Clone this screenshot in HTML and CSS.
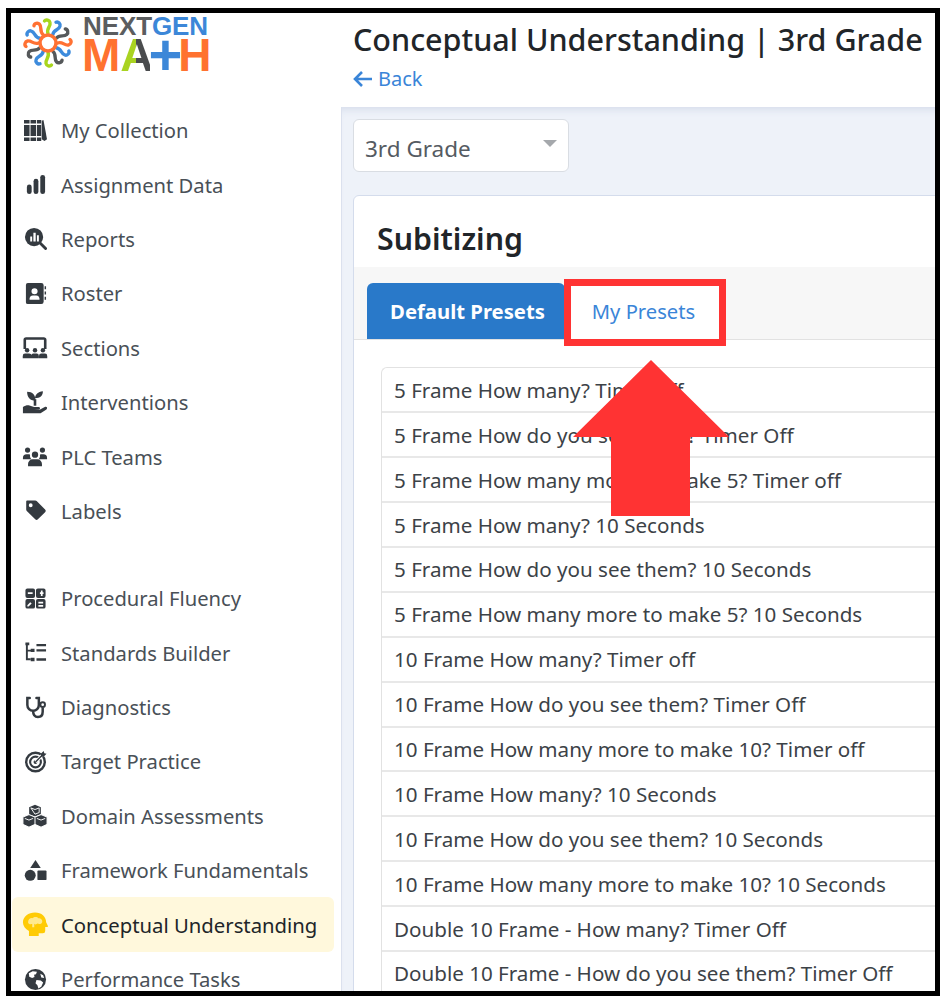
FILE: index.html
```html
<!DOCTYPE html>
<html lang="en">
<head>
<meta charset="utf-8">
<title>Conceptual Understanding | 3rd Grade</title>
<link rel="stylesheet" href="styles.css">
</head>
<body>
<svg class="defs" width="0" height="0" aria-hidden="true">
  <defs>
    <g id="petal" fill="none" stroke-width="3.4" stroke-linecap="round">
      <path d="M26 17C24 12 29 10 28 6C27.500 3.500 24 2.500 22.500 4.500"/>
    </g>
  </defs>
</svg>
<div class="frame">
  <aside class="sidebar">
    <div class="logo">
      <svg class="logo-mark" viewBox="0 0 52 54" aria-hidden="true">
        <g transform="translate(0 0.500)">
          <use href="#petal" stroke="#a8d51d"/>
          <use href="#petal" stroke="#3d8bdc" transform="rotate(30 26 26.500)"/>
          <use href="#petal" stroke="#55585a" transform="rotate(60 26 26.500)"/>
          <use href="#petal" stroke="#ff7133" transform="rotate(90 26 26.500)"/>
          <use href="#petal" stroke="#3d8bdc" transform="rotate(120 26 26.500)"/>
          <use href="#petal" stroke="#55585a" transform="rotate(150 26 26.500)"/>
          <use href="#petal" stroke="#a8d51d" transform="rotate(180 26 26.500)"/>
          <use href="#petal" stroke="#3d8bdc" transform="rotate(210 26 26.500)"/>
          <use href="#petal" stroke="#55585a" transform="rotate(240 26 26.500)"/>
          <use href="#petal" stroke="#ff7133" transform="rotate(270 26 26.500)"/>
          <use href="#petal" stroke="#3d8bdc" transform="rotate(300 26 26.500)"/>
          <use href="#petal" stroke="#ff7133" transform="rotate(330 26 26.500)"/>
          <circle cx="26" cy="26.500" r="8" fill="none" stroke="#ff7133" stroke-width="3.500"/>
        </g>
      </svg>
      <div class="logo-word">
        <div class="logo-top"><span class="gray">NEXT</span><span class="blue">GEN</span></div>
        <div class="logo-bottom"><span class="orange">M</span><span class="split-a">A</span><span class="blue plus">+</span><span class="orange">H</span></div>
      </div>
    </div>
    <nav class="nav">
      <a class="nav-item"><span class="nav-icon"><svg viewBox="0 0 24 24"><path d="M0 1h5.800v22H0zM6.800 1h5.800v22H6.800zM13.500 1h4.500v22h-4.500z"/><path d="M18.500 1.800l1.800-.8 3.700 20-2.600 2-2.900-2z"/><path d="M0 5.500h18M0 18.500h18" stroke="#fff" stroke-width="1.500" fill="none"/></svg></span><span>My Collection</span></a>
      <a class="nav-item"><span class="nav-icon"><svg viewBox="0 0 24 24"><rect x="3" y="12" width="5" height="10" rx="2.500"/><rect x="10" y="6" width="5" height="16" rx="2.500"/><rect x="17" y="2" width="5" height="20" rx="2.500"/></svg></span><span>Assignment Data</span></a>
      <a class="nav-item"><span class="nav-icon"><svg viewBox="0 0 24 24"><circle cx="10.500" cy="10.500" r="9.500"/><path d="M16.500 16.500l6 6" stroke="#343a40" stroke-width="3" stroke-linecap="round"/><path d="M6.500 10h2v5h-2zM9.800 6h2.400v9H9.800zM13.500 8.500h2V15h-2z" fill="#fff"/></svg></span><span>Reports</span></a>
      <a class="nav-item"><span class="nav-icon"><svg viewBox="0 0 24 24"><path fill-rule="evenodd" d="M4 1h14a2.500 2.500 0 0 1 2.500 2.500v17A2.500 2.500 0 0 1 18 23H4a2 2 0 0 1-2-2V3a2 2 0 0 1 2-2zm7 5.500a3.200 3.200 0 1 0 0 6.400 3.200 3.200 0 0 0 0-6.400zM5.800 18.500h10.400c.4-2.800-1.500-4.400-3.400-4.400H9.200c-1.900 0-3.800 1.600-3.400 4.400z"/><path d="M21.500 4.500H23v3h-1.500zM21.500 10H23v3h-1.500zM21.500 15.500H23v3h-1.500z"/></svg></span><span>Roster</span></a>
      <a class="nav-item"><span class="nav-icon wide"><svg viewBox="0 0 28 24"><path d="M3 13V3.200A1.500 1.500 0 0 1 4.500 1.700h19A1.500 1.500 0 0 1 25 3.200V13" fill="none" stroke="#343a40" stroke-width="2.800"/><circle cx="5.500" cy="14.500" r="2.400"/><circle cx="14" cy="14.500" r="2.400"/><circle cx="22.500" cy="14.500" r="2.400"/><path d="M.8 23v-2.500a2.500 2.500 0 0 1 2.500-2.500h4.400a2.500 2.500 0 0 1 2.500 2.500V23zM9.800 23v-2.500a2.500 2.500 0 0 1 2.500-2.500h3.400a2.500 2.500 0 0 1 2.500 2.500V23zM18.300 23v-2.500a2.500 2.500 0 0 1 2.500-2.500h3.900a2.500 2.500 0 0 1 2.500 2.500V23z"/></svg></span><span>Sections</span></a>
      <a class="nav-item"><span class="nav-icon wide"><svg viewBox="0 0 28 24"><path d="M14 16V9" stroke="#343a40" stroke-width="2.800" fill="none"/><path d="M14.500 10.500C8 10.500 5.500 6.500 5.500 1 11.500 1 14.500 4.500 14.500 10.500zM14 8c.5-4 3-7 8.500-7.500 0 5-3 7.500-8.500 7.500z"/><path d="M1 24v-6.500c2.500-1.800 5-2.300 7-1.700l5 1.500h5c1.800 0 1.800 3 0 3h-5l5.500.2 6-3c2-1 3.500 1 1.800 2.500L20 24z"/></svg></span><span>Interventions</span></a>
      <a class="nav-item"><span class="nav-icon wide"><svg viewBox="0 0 28 24"><circle cx="6" cy="4.500" r="2.800"/><circle cx="22" cy="4.500" r="2.800"/><circle cx="14" cy="9.500" r="3.400"/><path d="M1 14.500v-1.500a4 4 0 0 1 4-4h2.500c.8 0 1 .3 1.200.8-.4 1.800.3 3.200 1.300 4.700zM27 14.500V13a4 4 0 0 0-4-4h-2.500c-.8 0-1 .3-1.200.8.4 1.800-.3 3.200-1.300 4.700zM6.500 22v-2.500a5 5 0 0 1 5-5h5a5 5 0 0 1 5 5V22z"/></svg></span><span>PLC Teams</span></a>
      <a class="nav-item"><span class="nav-icon"><svg viewBox="0 0 24 24"><path fill-rule="evenodd" d="M3.500 1.500h8.300a2 2 0 0 1 1.400.6l8.800 8.800a2 2 0 0 1 0 2.800l-7.500 7.500a2 2 0 0 1-2.800 0L2.900 12.400a2 2 0 0 1-.6-1.400V2.700c0-.7.500-1.200 1.200-1.200zm3.500 3a2 2 0 1 0 0 4 2 2 0 0 0 0-4z"/></svg></span><span>Labels</span></a>
      <a class="nav-item group-start"><span class="nav-icon"><svg viewBox="0 0 24 24"><path fill-rule="evenodd" d="M3.500 1.500h6a2 2 0 0 1 2 2v6a2 2 0 0 1-2 2h-6a2 2 0 0 1-2-2v-6a2 2 0 0 1 2-2zM4 5.600v1.800h5V5.600zM14.500 1.500h6a2 2 0 0 1 2 2v6a2 2 0 0 1-2 2h-6a2 2 0 0 1-2-2v-6a2 2 0 0 1 2-2zm2.100 4.100V7.400h1V9.300h1.800V7.400h1V5.600h-1V3.700h-1.800v1.900zM3.500 12.500h6a2 2 0 0 1 2 2v6a2 2 0 0 1-2 2h-6a2 2 0 0 1-2-2v-6a2 2 0 0 1 2-2zm3 3.500l-3 3v1.300h1.300l3.200-3.100zM14.500 12.500h6a2 2 0 0 1 2 2v6a2 2 0 0 1-2 2h-6a2 2 0 0 1-2-2v-6a2 2 0 0 1 2-2zm.5 3v1.700h5v-1.700zm0 3.300v1.700h5v-1.700z"/></svg></span><span>Procedural Fluency</span></a>
      <a class="nav-item"><span class="nav-icon"><svg viewBox="0 0 24 24"><path d="M3 2v18M3 10h5M3 19h4" fill="none" stroke="#343a40" stroke-width="2"/><path d="M1.500 1.500h4v3h-4zM7 8h4v3.500H7zM7 17.500h4V21H7zM13 3h10v2.500H13zM13 8.500h10V11H13zM13 18h10v2.500H13z"/></svg></span><span>Standards Builder</span></a>
      <a class="nav-item"><span class="nav-icon"><svg viewBox="0 0 24 24"><path d="M6 2H3.500v7.500a6 6 0 0 0 12 0V2H13" fill="none" stroke="#343a40" stroke-width="2.600" stroke-linecap="round"/><path d="M9.500 15.500c0 4.500 2 6.500 5 6.500s5-2 5-5.500V12" fill="none" stroke="#343a40" stroke-width="2.600"/><circle cx="19.500" cy="9" r="2.400" fill="none" stroke="#343a40" stroke-width="2"/></svg></span><span>Diagnostics</span></a>
      <a class="nav-item"><span class="nav-icon"><svg viewBox="0 0 24 24"><circle cx="12" cy="12.500" r="9.700" fill="none" stroke="#343a40" stroke-width="2.500"/><circle cx="12" cy="12.500" r="5.600" fill="none" stroke="#343a40" stroke-width="2.200"/><circle cx="12" cy="12.500" r="2"/><path d="M12 12.500L20 4.500" stroke="#fff" stroke-width="3.400"/><path d="M12 12.500L20 4.500" stroke="#343a40" stroke-width="1.500"/><path d="M17.500 4l3-3 .7 2.300 2.300.7-3 3h-2.500z"/></svg></span><span>Target Practice</span></a>
      <a class="nav-item"><span class="nav-icon wide"><svg viewBox="0 0 28 24"><path d="M14 0l6.300 2.500v7.500L14 12.500 7.700 10V2.500z"/><path d="M7.500 10.500l6.500 2.600v7.900L7.500 24 1 21v-7.900zM20.500 10.500l6.500 2.600v7.900L20.500 24 14 21v-7.900z" stroke="#fff" stroke-width="1.100"/><path d="M9.500 3.300L14 5l4.500-1.700v5L14 10zM3 14.600l4.500 1.800 4.500-1.800M16 14.600l4.500 1.800 4.500-1.800" stroke="#fff" stroke-width="1" fill="none"/></svg></span><span>Domain Assessments</span></a>
      <a class="nav-item"><span class="nav-icon"><svg viewBox="0 0 24 24"><path d="M12 1l5.500 8.500h-11z"/><circle cx="6.500" cy="17" r="5.700"/><rect x="14" y="12" width="9.500" height="10" rx="1"/></svg></span><span>Framework Fundamentals</span></a>
      <a class="nav-item active"><span class="nav-icon wide"><svg viewBox="0 0 28 28"><path class="gold" d="M14 1c7 0 12 4.500 12 10.500l1.800 3.800c.3.800-.2 1.500-1 1.500H25v4.200a2.500 2.500 0 0 1-2.500 2.500H18v3H7.500v-5.500C3.500 18.500 1 15.500 1 11.500 1 5.500 7 1 14 1z"/><path class="brain" d="M6.500 11.500c0-3 2.500-4.800 5-4.300 1.200-1.700 5-1.700 6.200 0 3 0 4.600 2.200 4 4.300-.5 2-3.500 2.500-5 1.500-1 1-2.500 1.200-3.500.3V17h-2.200v-3.500c-2.500.5-4.500-.2-4.500-2z"/></svg></span><span>Conceptual Understanding</span></a>
      <a class="nav-item"><span class="nav-icon"><svg viewBox="0 0 24 24"><circle cx="12" cy="12" r="11"/><path d="M5 5.500l4-2 4.500.5-1 2.500-2 .5.500 2.500-2.500 1-3-1.500zM13 12.500l4.500.5 2.500 2-2 4.500-3 2-1-3.500-2-2zM17 6l3 1.500 1 3-3-.5z" fill="#fff"/></svg></span><span>Performance Tasks</span></a>
    </nav>
  </aside>
  <main class="main">
    <header class="page-head">
      <h1>Conceptual Understanding | 3rd Grade</h1>
      <a class="back"><svg viewBox="0 0 20 18" aria-hidden="true"><path d="M9 2L2 9l7 7M2.500 9H19" fill="none" stroke="currentColor" stroke-width="2.600"/></svg><span>Back</span></a>
    </header>
    <div class="content">
      <div class="select"><span>3rd Grade</span><i class="caret"></i></div>
      <section class="card">
        <h2>Subitizing</h2>
        <div class="tabs">
          <a class="tab on">Default Presets</a>
          <a class="tab off">My Presets</a>
          <span class="highlight-box"></span>
        </div>
        <div class="list-wrap">
          <ul class="list">
            <li>5 Frame How many? Timer off</li>
            <li>5 Frame How do you see them? Timer Off</li>
            <li>5 Frame How many more to make 5? Timer off</li>
            <li>5 Frame How many? 10 Seconds</li>
            <li>5 Frame How do you see them? 10 Seconds</li>
            <li>5 Frame How many more to make 5? 10 Seconds</li>
            <li>10 Frame How many? Timer off</li>
            <li>10 Frame How do you see them? Timer Off</li>
            <li>10 Frame How many more to make 10? Timer off</li>
            <li>10 Frame How many? 10 Seconds</li>
            <li>10 Frame How do you see them? 10 Seconds</li>
            <li>10 Frame How many more to make 10? 10 Seconds</li>
            <li>Double 10 Frame - How many? Timer Off</li>
            <li>Double 10 Frame - How do you see them? Timer Off</li>
          </ul>
        </div>
      </section>
    </div>
    <svg class="arrow" viewBox="0 0 156 156" aria-hidden="true"><path d="M78 0l78 77H117v79H38V77H0z"/></svg>
  </main>
</div>
</body>
</html>
```
FILE: styles.css
```css
* { box-sizing: border-box; }
html, body { margin: 0; padding: 0; background: #fff; }
body { font-family: "Noto Sans", "Open Sans", sans-serif; height: 1004px; overflow: hidden; padding: 8px 4px 0 6px; }
.defs { position: absolute; }
.frame {
  display: flex;
  width: 934px;
  height: 988px;
  border: 5px solid #000;
  overflow: hidden;
  background: #fff;
}
.sidebar { width: 330px; flex: none; background: #fff; }
.logo { height: 90px; display: flex; padding: 3px 0 0 11px; }
.logo-mark { width: 52px; height: 54px; flex: none; }
.logo-word { margin-left: 8px; font-family: "Liberation Sans", sans-serif; font-weight: 700; }
.logo-top { display: flex; height: 21px; margin-left: 1px; font-size: 26px; line-height: 21px; letter-spacing: -.1px; white-space: nowrap; }
.logo-bottom { display: flex; height: 34px; margin-top: 1px; font-size: 46px; line-height: 34px; white-space: nowrap; }
.logo-top span, .logo-bottom span { display: block; }
.gray { color: #5b5d5f; }
.blue { color: #3c87d8; }
.orange { color: #ff7230; }
.logo-bottom .plus { width: 34px; margin: 0 -4px 0 -2px; font-size: 58px; text-align: center; }
.split-a {
  width: 30px;
  background: linear-gradient(90deg, #a9d321 0 54%, #4a4c4e 54% 100%);
  -webkit-background-clip: text;
  background-clip: text;
  color: transparent;
}
.nav { display: flex; flex-direction: column; }
.nav-item {
  display: flex;
  align-items: center;
  height: 54.4px;
  margin: 0 7px 0 1px;
  padding-left: 10px;
  font-size: 20.2px;
  color: #495057;
  border-radius: 6px;
  white-space: nowrap;
}
.group-start { margin-top: 33px; }
.nav-icon { width: 26px; height: 26px; margin-right: 13px; display: flex; align-items: center; justify-content: center; flex: none; }
.nav-icon svg { width: 23px; height: 23px; fill: #343a40; }
.nav-icon.wide svg { width: 27px; height: 24px; }
.active { background: #fff8dc; color: #212529; font-size: 20.3px; }
.active .nav-icon.wide svg { width: 29px; height: 29px; }
.gold { fill: #ffcb05; }
.brain { fill: #ffe98f; }
.main { position: relative; width: 600px; flex: none; overflow: hidden; }
.page-head { height: 94px; padding: 4px 0 0 12px; background: #fff; }
h1 { margin: 0; font-size: 30.5px; line-height: 44px; font-weight: 500; color: #212529; white-space: nowrap; }
.back { display: flex; align-items: center; gap: 5px; margin-top: 3px; font-size: 20px; line-height: 30px; color: #3a85d8; }
.back svg { width: 20px; height: 18px; }
.content { height: 890px; padding: 12px 0 0 11px; background: #eef2f9; border-left: 1px solid #dbe1ee; box-shadow: inset 0 8px 8px -6px #d3daea; }
.select {
  position: relative;
  width: 216px;
  height: 53px;
  padding: 13px 0 0 11px;
  background: #fff;
  border: 1px solid #d9dde3;
  border-radius: 6px;
  font-size: 22.5px;
  line-height: 32px;
  color: #555b62;
}
.caret {
  position: absolute;
  right: 11px;
  top: 20px;
  border-left: 7px solid transparent;
  border-right: 7px solid transparent;
  border-top: 7px solid #a5a8ac;
}
.card {
  width: 640px;
  height: 860px;
  margin-top: 23px;
  background: #fff;
  border: 1px solid #d4dcec;
  border-radius: 6px 0 0 0;
}
h2 { margin: 0; height: 71px; padding: 20px 0 0 23px; font-size: 30.3px; line-height: 46px; font-weight: 600; color: #212529; }
.tabs {
  position: relative;
  display: flex;
  height: 73px;
  padding: 16px 0 0 13px;
  background: #f7f7f7;
  border-bottom: 1px solid #e2e2e2;
}
.tab { display: flex; align-items: center; justify-content: center; height: 56px; font-size: 20.2px; }
.tab.on { width: 198px; padding-left: 3px; background: #2979c9; color: #fff; font-weight: 700; font-size: 20.3px; border-radius: 6px 6px 0 0; }
.tab.off { width: 161px; padding-right: 4px; background: #fff; color: #3a85d8; }
.highlight-box {
  position: absolute;
  left: 210px;
  top: 12px;
  width: 162px;
  height: 67px;
  border: 7px solid #ff3333;
  pointer-events: none;
}
.list-wrap { padding: 27.4px 0 0 27px; }
.list { list-style: none; margin: 0; padding: 0; border-radius: 6px 0 0 6px; border: 1px solid #e2e2e2; border-width: 1px 0 0 1px; }
.list li {
  height: 44.9px;
  padding-left: 12px;
  display: flex;
  align-items: center;
  font-size: 20.6px;
  color: #3c4247;
  border-bottom: 2px solid #e8e8e8;
  white-space: nowrap;
}
.arrow {
  position: absolute;
  left: 232px;
  top: 347px;
  width: 156px;
  height: 156px;
  fill: #ff3333;
}
```
